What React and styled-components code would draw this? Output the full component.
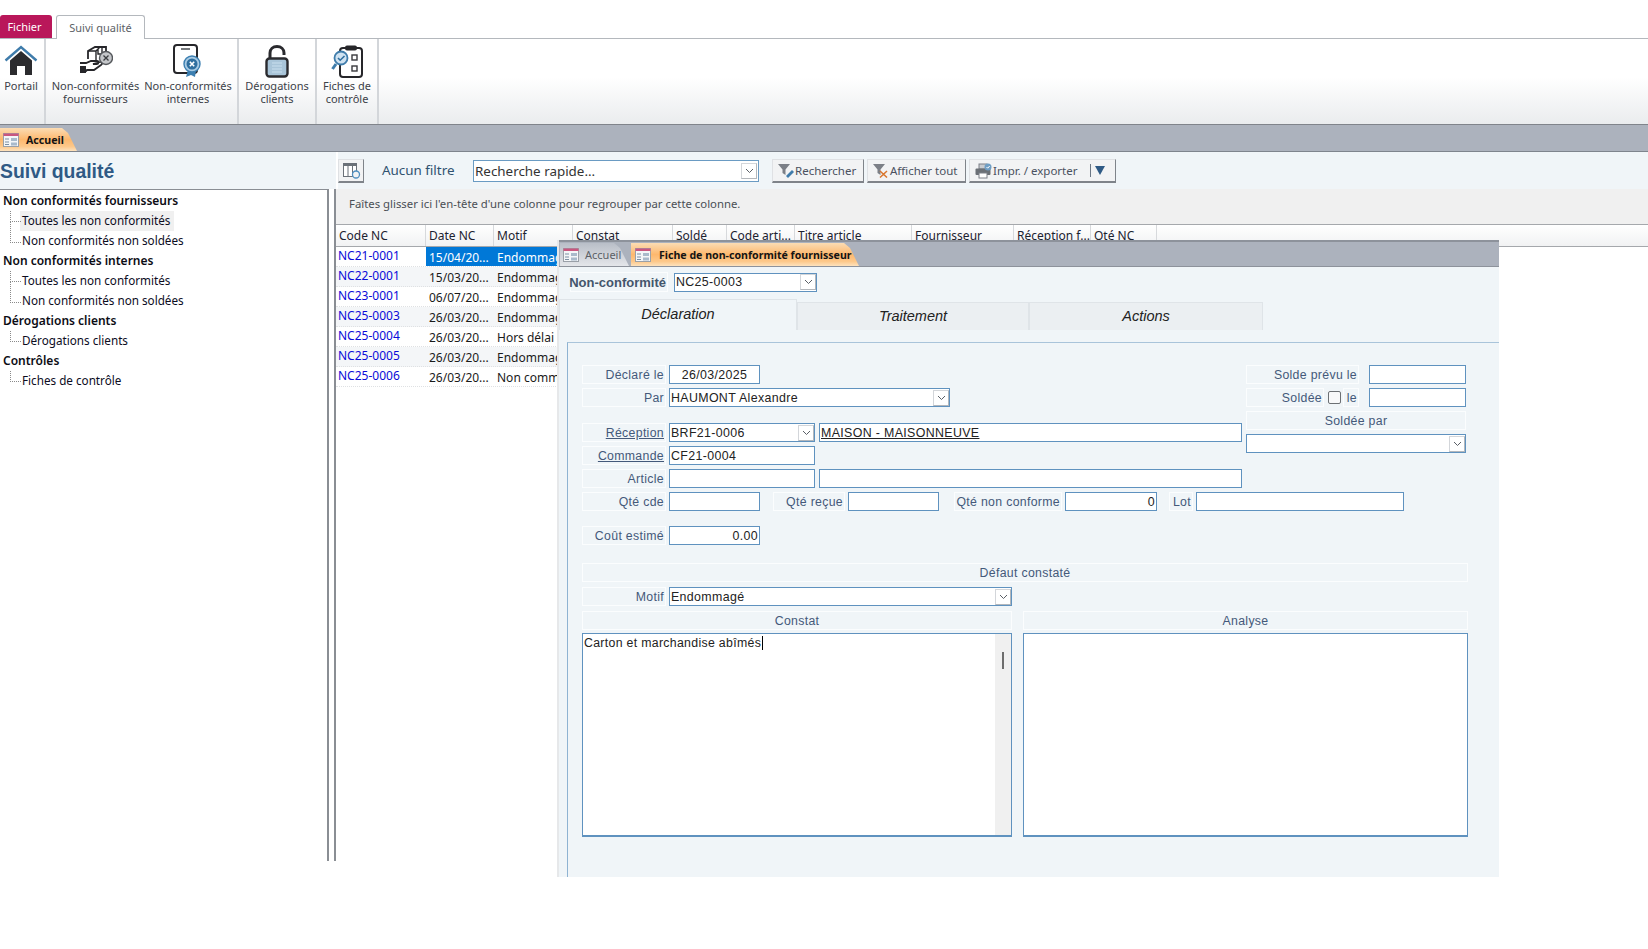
import React from "react";
import styled, { createGlobalStyle } from "styled-components";

const GlobalStyle = createGlobalStyle`
  html, body {
    margin: 0;
    padding: 0;
    background: #fff;
  }
  body {
    font-family: "Noto Sans", "Liberation Sans", sans-serif;
    overflow: hidden;
  }
  * {
    box-sizing: border-box;
  }
`;

const Page = styled.div`
  position: relative;
  width: 1648px;
  height: 949px;
  overflow: hidden;
  background: #fff;
`;

/* ---------- ribbon ---------- */

const TabStrip = styled.div`
  display: flex;
  align-items: flex-end;
  gap: 4px;
  height: 39px;
  padding-top: 15px;
  border-bottom: 1px solid #b4b8bd;
`;

const FileTab = styled.div`
  width: 52px;
  height: 23px;
  padding: 4px 3px 0 0;
  text-align: center;
  font-size: 11px;
  color: #fff;
  background: #b9175a;
  border-radius: 3px 3px 0 0;
`;

const RibbonTab = styled.div`
  width: 89px;
  height: 24px;
  margin-bottom: -1px;
  padding-top: 4px;
  text-align: center;
  font-size: 11px;
  color: #5c6166;
  background: #fff;
  border: 1px solid #b4b8bd;
  border-bottom: none;
  border-radius: 3px 3px 0 0;
`;

const Ribbon = styled.div`
  display: flex;
  height: 86px;
  background: linear-gradient(#fff 0%, #fff 45%, #eaecee 100%);
  border-bottom: 1px solid #80848b;
`;

const RibbonGroup = styled.div`
  display: flex;
  width: ${(p) => p.$width}px;
  border-right: 2px solid #d3d6da;
`;

const RibbonButton = styled.div`
  display: flex;
  flex-direction: column;
  align-items: center;
  width: ${(p) => p.$width}px;
  flex: none;
  white-space: nowrap;
`;

const RibbonIcon = styled.div`
  display: flex;
  justify-content: center;
  align-items: center;
  height: 38px;
  margin-top: 3px;
`;

const RibbonLabel = styled.div`
  font-size: 11px;
  line-height: 13px;
  text-align: center;
  color: #3c4148;
  margin-top: -1px;
`;

const DocBar = styled.div`
  display: flex;
  align-items: flex-end;
  height: 27px;
  background: #acb2bd;
  border-bottom: 1px solid #7e848d;
`;

const DocTab = styled.div`
  display: flex;
  align-items: center;
  gap: ${(p) => p.$gap}px;
  width: ${(p) => p.$width}px;
  height: ${(p) => p.$height}px;
  padding-left: ${(p) => p.$pad ?? 3}px;
  font-size: ${(p) => (p.$active ? 10.6 : 11)}px;
  font-weight: ${(p) => (p.$active ? 700 : 400)};
  white-space: nowrap;
  color: ${(p) => (p.$active ? "#141414" : "#5b5f66")};
  background: ${(p) =>
    p.$active
      ? "linear-gradient(#fbdcb4 0%, #fdb86e 50%, #fdc88a 80%, #fde2bd 100%)"
      : "linear-gradient(#b9bec7 0%, #d3d6dc 60%, #e4e6ea 100%)"};
  clip-path: polygon(0 0, calc(100% - 15px) 0, calc(100% - 9px) 5px, 100% 100%, 0 100%);
`;

/* ---------- main area ---------- */

const Workspace = styled.div`
  display: grid;
  grid-template-columns: 336px 1fr;
  height: 709px;
`;

const LeftPane = styled.div`
  display: flex;
  flex-direction: column;
`;

const PageTitle = styled.div`
  height: 37px;
  padding-top: 6px;
  font-family: "Liberation Sans", Arial, sans-serif;
  font-size: 19.4px;
  font-weight: 700;
  line-height: 26px;
  color: #2f5a85;
  background: #f0f5f8;
`;

const TreePanel = styled.div`
  flex: 1;
  margin-right: 7px;
  padding-top: 1px;
  background: #fff;
  border-top: 1px solid #8a8e94;
  border-right: 2px solid #8a8e94;
`;

const TreeHead = styled.div`
  height: 20px;
  padding-left: 3px;
  font-size: 12px;
  font-weight: 600;
  line-height: 20px;
  color: #0c0c14;
`;

const TreeItem = styled.div`
  position: relative;
  height: 20px;
  margin-left: 20px;
  padding-left: 2px;
  width: ${(p) => (p.$selected ? "154px" : "auto")};
  font-size: 11.7px;
  line-height: 18px;
  white-space: nowrap;
  color: #0c0c1e;
  background: ${(p) => (p.$selected ? "#f0f0f0" : "transparent")};

  &::before {
    content: "";
    position: absolute;
    left: -10px;
    top: ${(p) => (p.$continued ? "-9px" : "0")};
    width: 10px;
    height: ${(p) => (p.$continued ? "20px" : "10px")};
    border-left: 1px dotted #8a8a8a;
    border-bottom: 1px dotted #8a8a8a;
  }
`;

const RightPane = styled.div`
  display: flex;
  flex-direction: column;
  border-left: 2px solid transparent;
`;

const Toolbar = styled.div`
  display: flex;
  align-items: center;
  height: 37px;
  padding-top: 1px;
  background: #f0f5f8;
`;

const ToolButton = styled.div`
  display: flex;
  align-items: center;
  gap: ${(p) => p.$gap || 0}px;
  width: ${(p) => p.$width}px;
  height: 24px;
  margin-left: ${(p) => p.$left || 0}px;
  padding-left: ${(p) => p.$pad || 0}px;
  flex: none;
  font-size: 11.5px;
  color: #4a5160;
  white-space: nowrap;
  background: #f2f3f4;
  border-top: 1px solid #dfe1e4;
  border-left: 1px solid #dfe1e4;
  border-right: 1px solid #7f848a;
  border-bottom: 2px solid #7f848a;
`;

const FilterLabel = styled.div`
  margin-left: 18px;
  margin-top: -3px;
  width: 91px;
  flex: none;
  font-size: 13.4px;
  color: #2f5270;
`;

const SearchBox = styled.div`
  display: flex;
  align-items: center;
  justify-content: space-between;
  width: 286px;
  height: 22px;
  margin-right: 13px;
  padding: 0 1px 1px 1px;
  flex: none;
  font-size: 13.4px;
  color: #333;
  background: #fff;
  border: 1px solid #6a9bc3;
`;

const ToolDivider = styled.span`
  margin-left: 13px;
  width: 1px;
  height: 13px;
  background: #6b7785;
`;

const ToolCaret = styled.span`
  margin-left: 4px;
  width: 0;
  height: 0;
  border-left: 5px solid transparent;
  border-right: 5px solid transparent;
  border-top: 9px solid #2f5a85;
`;

const GridPanel = styled.div`
  flex: 1;
  min-height: 0;
  margin-left: -4px;
  background: #fff;
  border-left: 2px solid #8a8e94;
`;

const GroupHint = styled.div`
  height: 36px;
  padding: 7px 0 0 13px;
  font-size: 11.35px;
  color: #4a4f55;
  background: #f0f0f0;
  border-bottom: 1px solid #a5a8ac;
`;

const columns = "90px 68px 79px 100px 54px 68px 117px 102px 77px 66px";

const HeaderRow = styled.div`
  display: grid;
  grid-template-columns: ${columns};
  height: 22px;
  background: linear-gradient(#fff, #f1f2f3);
  border-bottom: 1px solid #a5a8ac;
`;

const HeaderCell = styled.div`
  padding: 2px 0 0 3px;
  font-size: 12px;
  line-height: 17px;
  color: #1c2230;
  white-space: nowrap;
  overflow: hidden;
  border-right: 1px solid #d7d9dc;
`;

const DataRow = styled.div`
  display: grid;
  grid-template-columns: ${columns};
  height: 20px;
  width: 820px;
  background: ${(p) => (p.$alt ? "#f4f6f8" : "#fff")};
  border-bottom: 1px dotted #dfe1e3;
`;

const CodeCell = styled.div`
  padding-left: 2px;
  font-size: 12px;
  line-height: 18px;
  color: #0a0ad8;
`;

const DataCell = styled.div`
  padding: 2px 0 0 3px;
  font-size: 12px;
  line-height: 18px;
  white-space: nowrap;
  overflow: hidden;
  color: ${(p) => (p.$selected ? "#fff" : "#1a1a1a")};
  background: ${(p) => (p.$selected ? "#0078d7" : "transparent")};
`;

/* ---------- floating window ---------- */

const FormWindow = styled.div`
  position: absolute;
  left: 557px;
  top: 240px;
  display: flex;
  flex-direction: column;
  width: 942px;
  height: 637px;
  background: #f0f5f8;
  border-left: 2px solid #e6e8ea;
  font-family: "Liberation Sans", Arial, sans-serif;
`;

const WindowTabs = styled.div`
  display: flex;
  align-items: flex-end;
  gap: 2px;
  height: 27px;
  flex: none;
  padding-left: 1px;
  background: #acb2bd;
  border-top: 2px solid #8d929b;
  border-bottom: 1px solid #8d929b;
  font-family: "Noto Sans", sans-serif;
`;

const NcRow = styled.div`
  display: flex;
  align-items: center;
  height: 20px;
  margin: 5px 0 0 11px;
  flex: none;
`;

const NcLabel = styled.div`
  display: flex;
  align-items: center;
  justify-content: flex-end;
  width: 98px;
  height: 20px;
  margin-right: 6px;
  padding-right: 1px;
  font-size: 13px;
  font-weight: 700;
  white-space: nowrap;
  color: #44566c;
  border: 1px solid #fbfdfe;
`;

const FormTabs = styled.div`
  display: flex;
  align-items: flex-end;
  height: 31px;
  margin-top: 7px;
  flex: none;
`;

const FormTab = styled.div`
  display: flex;
  align-items: center;
  justify-content: center;
  width: ${(p) => p.$width}px;
  height: ${(p) => (p.$active ? 31 : 28)}px;
  padding-bottom: ${(p) => (p.$active ? 2 : 1)}px;
  font-size: 14.5px;
  font-style: italic;
  color: #222;
  background: ${(p) => (p.$active ? "#f0f5f8" : "#ebeff2")};
  border: 1px solid #dfe4e8;
  border-bottom: none;
`;

const TabBody = styled.div`
  flex: 1;
  margin: 12px 0 0 8px;
  padding: 22px 0 0 14px;
  border-top: 1px solid #a9c4da;
  border-left: 1px solid #8fb3d2;
`;

const TopBlock = styled.div`
  display: flex;
  gap: 4px;
`;

const Column = styled.div`
  display: flex;
  flex-direction: column;
  width: ${(p) => p.$width}px;
`;

const FieldRow = styled.div`
  display: flex;
  height: 19px;
  margin-top: ${(p) => p.$top || 0}px;
  margin-bottom: ${(p) => p.$bottom ?? 4}px;
`;

const Label = styled.div`
  display: flex;
  align-items: center;
  justify-content: ${(p) => p.$align || "flex-end"};
  width: ${(p) => p.$width}px;
  height: 19px;
  margin-right: ${(p) => p.$right ?? 3}px;
  margin-left: ${(p) => p.$left || 0}px;
  padding: 0 1px;
  flex: none;
  font-size: 12.3px;
  letter-spacing: 0.32px;
  white-space: nowrap;
  color: #44597a;
  border: 1px solid #fbfdfe;
  text-decoration: ${(p) => (p.$link ? "underline" : "none")};
`;

const Input = styled.div`
  display: flex;
  align-items: center;
  justify-content: ${(p) => p.$align || "flex-start"};
  width: ${(p) => p.$width}px;
  height: 19px;
  margin-left: ${(p) => p.$left || 0}px;
  padding: 0 1px;
  flex: none;
  font-size: 12.4px;
  letter-spacing: 0.35px;
  white-space: nowrap;
  color: #222;
  background: #fff;
  border: 1px solid #5f92bf;
  border-bottom-width: 1.5px;
  text-decoration: ${(p) => (p.$link ? "underline" : "none")};
`;

const ComboWrap = styled(Input)`
  justify-content: space-between;
  padding-right: 0;
`;

const ComboArrow = styled.span`
  display: flex;
  align-items: center;
  justify-content: center;
  width: 16px;
  height: 16px;
  flex: none;
  background: #fff;
  border: 1px solid #d3d6da;
  border-bottom-color: #b3b7bc;
  border-right-color: #b3b7bc;
`;

const CheckBox = styled.span`
  width: 13px;
  height: 13px;
  margin: 3px 2px 0 4px;
  flex: none;
  background: #f8f9fa;
  border: 1px solid #6c7074;
  border-radius: 2px;
`;

const MemoRow = styled.div`
  display: flex;
  gap: 11px;
`;

const Memo = styled.div`
  display: flex;
  justify-content: space-between;
  width: ${(p) => p.$width}px;
  height: 204px;
  padding: 1px 0 0 1px;
  font-size: 12.3px;
  letter-spacing: 0.32px;
  line-height: 17px;
  color: #222;
  background: #fff;
  border: 1px solid #5f92bf;
  border-bottom-width: 2px;
`;

const Caret = styled.span`
  display: inline-block;
  width: 1px;
  height: 14px;
  margin-left: 1px;
  vertical-align: -3px;
  background: #000;
`;

const MemoScroll = styled.div`
  display: flex;
  justify-content: center;
  width: 16px;
  margin-top: -1px;
  padding-top: 18px;
  flex: none;
  background: #f0f0f0;
`;

const MemoThumb = styled.span`
  width: 2px;
  height: 17px;
  background: #6d6d6d;
`;

/* ---------- icons ---------- */

const ChevronIcon = () => (
  <svg width="9" height="6" viewBox="0 0 9 6">
    <path d="M1 1l3.5 3.5L8 1" fill="none" stroke="#5a5f66" strokeWidth="1" />
  </svg>
);

const FormIcon = () => (
  <svg width="16" height="14" viewBox="0 0 16 14">
    <rect x="0.5" y="0.5" width="15" height="13" fill="#f4f6f8" stroke="#9aa0a8" />
    <rect x="0.5" y="0.5" width="15" height="2.5" fill="#c9567f" />
    <path d="M2 6h4M2 9h4M2 11.5h4" stroke="#7c8fa3" strokeWidth="1.2" />
    <rect x="8" y="5" width="6" height="3" fill="#a9bacb" />
    <rect x="8" y="9.5" width="6" height="3" fill="#a9bacb" />
  </svg>
);

const HomeIcon = () => (
  <svg width="34" height="32" viewBox="0 0 34 32">
    <path d="M1.5 15.5L17 2l15.5 13.5" fill="none" stroke="#3f7cab" strokeWidth="2.4" />
    <path d="M6 15.5L17 6l11 9.5V30H21V21h-8v9H6z" fill="#2b2b2e" />
  </svg>
);

const SupplierIcon = () => (
  <svg width="34" height="30" viewBox="0 0 34 30">
    <path d="M9 13V5l7-4h11v8" fill="none" stroke="#26262a" strokeWidth="1.8" />
    <path d="M9 5h8v9M17 5l4-4M19 3v5h4V2" fill="none" stroke="#26262a" strokeWidth="1.4" />
    <path
      d="M1 17h6l5-2h6c2 0 2 3 0 3h-4l7-2c2-.5 3 1.500 1 3l-7 5H8l-1 1H1"
      fill="#fff"
      stroke="#26262a"
      strokeWidth="1.8"
    />
    <path d="M1 20h6v7H1z" fill="#26262a" />
    <circle cx="27" cy="12" r="6.500" fill="#c4c6c9" stroke="#55585c" strokeWidth="1.4" />
    <path d="M24.500 9.500l5 5M29.500 9.500l-5 5" stroke="#3b3d40" strokeWidth="1.3" />
  </svg>
);

const CertificateIcon = () => (
  <svg width="30" height="34" viewBox="0 0 30 34">
    <rect x="1" y="1" width="23" height="28" rx="3" fill="#fff" stroke="#26262a" strokeWidth="2" />
    <path d="M8 5h9" stroke="#55585c" strokeWidth="1.6" />
    <path d="M15 26l-2 7 5-2 4 2 1-7z" fill="#3c7fb1" />
    <circle cx="19" cy="20" r="8" fill="#a9cbe4" stroke="#3c7fb1" strokeWidth="1.400" />
    <circle cx="19" cy="20" r="5.500" fill="#2f6f9f" />
    <path d="M16.800 17.800l4.400 4.400M21.200 17.800l-4.400 4.400" stroke="#fff" strokeWidth="1.600" />
  </svg>
);

const LockIcon = () => (
  <svg width="24" height="33" viewBox="0 0 24 33">
    <path d="M5 13V8c0-4 3-6.500 7-6.500s7 2.500 7 6.500v2" fill="none" stroke="#2a2a2e" strokeWidth="3" />
    <rect x="1.500" y="13.500" width="21" height="18" rx="3" fill="#a9c5d9" stroke="#2a2a2e" strokeWidth="2.400" />
    <path d="M7 18h10M7 21h10M7 24h10M7 27h10" stroke="#c9dfee" strokeWidth="1" />
  </svg>
);

const ClipboardIcon = () => (
  <svg width="33" height="33" viewBox="0 0 33 33">
    <rect x="9" y="3" width="22" height="29" rx="3" fill="#fff" stroke="#26262a" strokeWidth="2" />
    <rect x="14" y="0.500" width="12" height="5" rx="2" fill="#26262a" />
    <rect x="21" y="10" width="5" height="5" fill="#fff" stroke="#3a3a3e" strokeWidth="1.400" />
    <rect x="21" y="21" width="5" height="5" fill="#fff" stroke="#3a3a3e" strokeWidth="1.400" />
    <path d="M5 19l-3.500 5" stroke="#3f7cab" strokeWidth="3" />
    <circle cx="10" cy="13" r="6.500" fill="#cfe2f1" stroke="#3f7cab" strokeWidth="1.800" />
    <path d="M7 13l2.200 2.200L13.500 11" fill="none" stroke="#2f6f9f" strokeWidth="1.600" />
  </svg>
);

const ColumnsIcon = () => (
  <svg width="18" height="16" viewBox="0 0 18 16">
    <rect x="0.500" y="0.500" width="13" height="13" fill="#fff" stroke="#6b7178" />
    <rect x="0.500" y="0.500" width="13" height="2.500" fill="#6b7178" />
    <path d="M5 3v10M9.500 3v10" stroke="#6b7178" />
    <circle cx="13" cy="11.500" r="3.500" fill="#f2f3f4" stroke="#4f8fc0" strokeWidth="1.300" />
  </svg>
);

const SearchFilterIcon = () => (
  <svg width="18" height="15" viewBox="0 0 18 15">
    <path d="M1 1h12L8.500 6.500V12L5.500 10V6.500z" fill="#7c8087" />
    <path d="M9 13l6-6 2 2-6 6z" fill="#3f7cab" />
  </svg>
);

const ClearFilterIcon = () => (
  <svg width="18" height="15" viewBox="0 0 18 15">
    <path d="M1 1h12L8.500 6.500V12L5.500 10V6.500z" fill="#7c8087" />
    <path d="M8 8l7 6.500M15 8l-7 6.500" stroke="#d9762e" strokeWidth="1.500" />
  </svg>
);

const PrintIcon = () => (
  <svg width="18" height="16" viewBox="0 0 18 16">
    <rect x="4" y="1" width="8" height="5" fill="#c9ccd0" stroke="#7c8087" />
    <rect x="0.500" y="5.500" width="15" height="6.500" rx="1" fill="#6b7076" />
    <rect x="4" y="10" width="8" height="5" fill="#fff" stroke="#7c8087" />
    <circle cx="13" cy="4" r="3.500" fill="#6f9ec4" />
    <path d="M11.500 4l1.200 1.200 2-2.200" fill="none" stroke="#fff" strokeWidth="1" />
  </svg>
);

/* ---------- data ---------- */

const headers = [
  "Code NC",
  "Date NC",
  "Motif",
  "Constat",
  "Soldé",
  "Code arti...",
  "Titre article",
  "Fournisseur",
  "Réception f...",
  "Qté NC",
];

const rows = [
  ["NC21-0001", "15/04/20...", "Endommagé"],
  ["NC22-0001", "15/03/20...", "Endommagé"],
  ["NC23-0001", "06/07/20...", "Endommagé"],
  ["NC25-0003", "26/03/20...", "Endommagé"],
  ["NC25-0004", "26/03/20...", "Hors délai"],
  ["NC25-0005", "26/03/20...", "Endommagé"],
  ["NC25-0006", "26/03/20...", "Non commandé"],
];

const Combo = ({ width, left, children }) => (
  <ComboWrap $width={width} $left={left}>
    <span>{children}</span>
    <ComboArrow>
      <ChevronIcon />
    </ComboArrow>
  </ComboWrap>
);

const App = () => {
  return (
    <Page>
      <GlobalStyle />

      <TabStrip>
        <FileTab>Fichier</FileTab>
        <RibbonTab>Suivi qualité</RibbonTab>
      </TabStrip>

      <Ribbon>
        <RibbonGroup $width={46}>
          <RibbonButton $width={42}>
            <RibbonIcon>
              <HomeIcon />
            </RibbonIcon>
            <RibbonLabel>Portail</RibbonLabel>
          </RibbonButton>
        </RibbonGroup>
        <RibbonGroup $width={193}>
          <RibbonButton $width={99}>
            <RibbonIcon>
              <SupplierIcon />
            </RibbonIcon>
            <RibbonLabel>
              Non-conformités
              <br />
              fournisseurs
            </RibbonLabel>
          </RibbonButton>
          <RibbonButton $width={86}>
            <RibbonIcon>
              <CertificateIcon />
            </RibbonIcon>
            <RibbonLabel>
              Non-conformités
              <br />
              internes
            </RibbonLabel>
          </RibbonButton>
        </RibbonGroup>
        <RibbonGroup $width={78}>
          <RibbonButton $width={76}>
            <RibbonIcon>
              <LockIcon />
            </RibbonIcon>
            <RibbonLabel>
              Dérogations
              <br />
              clients
            </RibbonLabel>
          </RibbonButton>
        </RibbonGroup>
        <RibbonGroup $width={62}>
          <RibbonButton $width={60}>
            <RibbonIcon>
              <ClipboardIcon />
            </RibbonIcon>
            <RibbonLabel>
              Fiches de
              <br />
              contrôle
            </RibbonLabel>
          </RibbonButton>
        </RibbonGroup>
      </Ribbon>

      <DocBar>
        <DocTab $active $width={77} $height={23} $gap={7}>
          <FormIcon />
          Accueil
        </DocTab>
      </DocBar>

      <Workspace>
        <LeftPane>
          <PageTitle>Suivi qualité</PageTitle>
          <TreePanel>
            <TreeHead>Non conformités fournisseurs</TreeHead>
            <TreeItem $selected>Toutes les non conformités</TreeItem>
            <TreeItem $continued>Non conformités non soldées</TreeItem>
            <TreeHead>Non conformités internes</TreeHead>
            <TreeItem>Toutes les non conformités</TreeItem>
            <TreeItem $continued>Non conformités non soldées</TreeItem>
            <TreeHead>Dérogations clients</TreeHead>
            <TreeItem>Dérogations clients</TreeItem>
            <TreeHead>Contrôles</TreeHead>
            <TreeItem>Fiches de contrôle</TreeItem>
          </TreePanel>
        </LeftPane>

        <RightPane>
          <Toolbar>
            <ToolButton $width={26} $pad={4}>
              <ColumnsIcon />
            </ToolButton>
            <FilterLabel>Aucun filtre</FilterLabel>
            <SearchBox>
              Recherche rapide...
              <ComboArrow>
                <ChevronIcon />
              </ComboArrow>
            </SearchBox>
            <ToolButton $width={92} $pad={4}>
              <SearchFilterIcon />
              Rechercher
            </ToolButton>
            <ToolButton $width={99} $left={3} $pad={4}>
              <ClearFilterIcon />
              Afficher tout
            </ToolButton>
            <ToolButton $width={147} $left={3} $pad={5}>
              <PrintIcon />
              Impr. / exporter
              <ToolDivider />
              <ToolCaret />
            </ToolButton>
          </Toolbar>

          <GridPanel>
            <GroupHint>Faîtes glisser ici l'en-tête d'une colonne pour regrouper par cette colonne.</GroupHint>
            <HeaderRow>
              {headers.map((h) => (
                <HeaderCell key={h}>{h}</HeaderCell>
              ))}
            </HeaderRow>
            {rows.map((r, i) => (
              <DataRow key={r[0]} $alt={i % 2 === 1}>
                <CodeCell>{r[0]}</CodeCell>
                <DataCell $selected={i === 0}>{r[1]}</DataCell>
                <DataCell $selected={i === 0}>{r[2]}</DataCell>
              </DataRow>
            ))}
          </GridPanel>
        </RightPane>
      </Workspace>

      <FormWindow>
        <WindowTabs>
          <DocTab $width={69} $height={23} $gap={6}>
            <FormIcon />
            Accueil
          </DocTab>
          <DocTab $active $width={228} $height={23} $gap={8} $pad={4}>
            <FormIcon />
            Fiche de non-conformité fournisseur
          </DocTab>
        </WindowTabs>

        <NcRow>
          <NcLabel>Non-conformité</NcLabel>
          <Combo width={143}>NC25-0003</Combo>
        </NcRow>

        <FormTabs>
          <FormTab $active $width={238}>
            Déclaration
          </FormTab>
          <FormTab $width={232}>Traitement</FormTab>
          <FormTab $width={234}>Actions</FormTab>
        </FormTabs>

        <TabBody>
          <TopBlock>
            <Column $width={660}>
              <FieldRow>
                <Label $width={84}>Déclaré le</Label>
                <Input $width={91} $align="center">
                  26/03/2025
                </Input>
              </FieldRow>
              <FieldRow $bottom={16}>
                <Label $width={84}>Par</Label>
                <Combo width={281}>HAUMONT Alexandre</Combo>
              </FieldRow>
              <FieldRow>
                <Label $width={84} $link>
                  Réception
                </Label>
                <Combo width={146}>BRF21-0006</Combo>
                <Input $width={423} $left={4} $link>
                  MAISON - MAISONNEUVE
                </Input>
              </FieldRow>
              <FieldRow>
                <Label $width={84} $link>
                  Commande
                </Label>
                <Input $width={146}>CF21-0004</Input>
              </FieldRow>
              <FieldRow>
                <Label $width={84}>Article</Label>
                <Input $width={146} />
                <Input $width={423} $left={4} />
              </FieldRow>
            </Column>
            <Column $width={220}>
              <FieldRow>
                <Label $width={113} $right={10}>
                  Solde prévu le
                </Label>
                <Input $width={97} />
              </FieldRow>
              <FieldRow>
                <Label $width={78} $right={0}>
                  Soldée
                </Label>
                <CheckBox />
                <Label $width={16} $right={10}>
                  le
                </Label>
                <Input $width={97} />
              </FieldRow>
              <FieldRow>
                <Label $width={220} $right={0} $align="center">
                  Soldée par
                </Label>
              </FieldRow>
              <FieldRow>
                <Combo width={220} />
              </FieldRow>
            </Column>
          </TopBlock>

          <FieldRow $bottom={15}>
            <Label $width={84}>Qté cde</Label>
            <Input $width={91} />
            <Label $width={72} $left={13}>
              Qté reçue
            </Label>
            <Input $width={91} />
            <Label $width={108} $left={15}>
              Qté non conforme
            </Label>
            <Input $width={92} $align="flex-end">
              0
            </Input>
            <Label $width={24} $left={12}>
              Lot
            </Label>
            <Input $width={208} />
          </FieldRow>

          <FieldRow $bottom={18}>
            <Label $width={84}>Coût estimé</Label>
            <Input $width={91} $align="flex-end">
              0.00
            </Input>
          </FieldRow>

          <FieldRow $bottom={5}>
            <Label $width={886} $right={0} $align="center">
              Défaut constaté
            </Label>
          </FieldRow>
          <FieldRow $bottom={5}>
            <Label $width={84}>Motif</Label>
            <Combo width={343}>Endommagé</Combo>
          </FieldRow>
          <MemoRow>
            <Column $width={430}>
              <FieldRow $bottom={3}>
                <Label $width={430} $right={0} $align="center">
                  Constat
                </Label>
              </FieldRow>
              <Memo $width={430}>
                <span>
                  Carton et marchandise abîmés
                  <Caret />
                </span>
                <MemoScroll>
                  <MemoThumb />
                </MemoScroll>
              </Memo>
            </Column>
            <Column $width={445}>
              <FieldRow $bottom={3}>
                <Label $width={445} $right={0} $align="center">
                  Analyse
                </Label>
              </FieldRow>
              <Memo $width={445} />
            </Column>
          </MemoRow>
        </TabBody>
      </FormWindow>
    </Page>
  );
};

export default App;
